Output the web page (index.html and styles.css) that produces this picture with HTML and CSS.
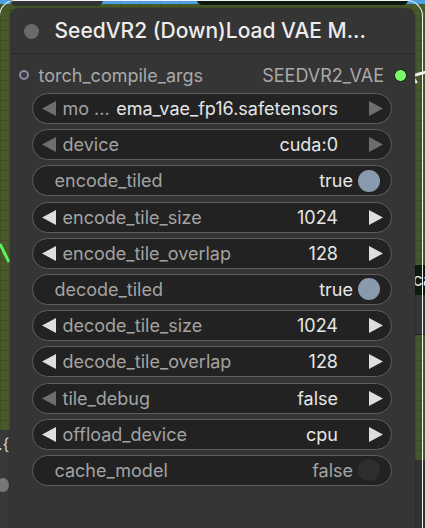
FILE: index.html
```html
<!DOCTYPE html>
<html>
<head>
<meta charset="utf-8">
<link rel="stylesheet" href="styles.css">
</head>
<body>
<div class="canvas">
  <div class="deco strip-top"></div>
  <div class="deco tab-left"></div>
  <div class="deco box-top"></div>
  <div class="deco box-right"><span>ca</span></div>
  <div class="deco grey-right-1"></div>
  <div class="deco grey-right-2"></div>
  <div class="deco grey-left"><span class="frag">.{</span><span class="ldot"></span></div>
  <svg class="deco link-left" width="10" height="24" viewBox="0 0 10 24"><path d="M0 2 L9 20" stroke="#5cf25c" stroke-width="3" fill="none"/></svg>
  <svg class="deco link-right" width="16" height="14" viewBox="0 0 16 14"><path d="M2 6 L16 2 M2 6 L6 12" stroke="#f2f2f2" stroke-width="3" fill="none" stroke-linecap="round"/></svg>

  <div class="selection">
    <div class="node">
      <div class="title">
        <span class="title-dot"></span>
        <span class="title-text">SeedVR2 (Down)Load VAE M...</span>
      </div>
      <div class="io">
        <div class="io-in"><span class="slot-in"></span><span>torch_compile_args</span></div>
        <div class="io-out"><span>SEEDVR2_VAE</span><span class="slot-out"></span></div>
      </div>
      <div class="widgets">
        <div class="widget combo">
          <svg class="arr dim" viewBox="0 0 14 15"><path d="M0 7.5 L14 0 L14 15 Z"/></svg>
          <span class="label short">mo ...</span>
          <span class="value">ema_vae_fp16.safetensors</span>
          <svg class="arr dim" viewBox="0 0 14 15"><path d="M14 7.5 L0 0 L0 15 Z"/></svg>
        </div>
        <div class="widget combo">
          <svg class="arr dim" viewBox="0 0 14 15"><path d="M0 7.5 L14 0 L14 15 Z"/></svg>
          <span class="label">device</span>
          <span class="value">cuda:0</span>
          <svg class="arr dim" viewBox="0 0 14 15"><path d="M14 7.5 L0 0 L0 15 Z"/></svg>
        </div>
        <div class="widget toggle">
          <span class="label">encode_tiled</span>
          <span class="value">true</span>
          <span class="knob on"></span>
        </div>
        <div class="widget combo">
          <svg class="arr" viewBox="0 0 14 15"><path d="M0 7.5 L14 0 L14 15 Z"/></svg>
          <span class="label">encode_tile_size</span>
          <span class="value">1024</span>
          <svg class="arr" viewBox="0 0 14 15"><path d="M14 7.5 L0 0 L0 15 Z"/></svg>
        </div>
        <div class="widget combo">
          <svg class="arr" viewBox="0 0 14 15"><path d="M0 7.5 L14 0 L14 15 Z"/></svg>
          <span class="label">encode_tile_overlap</span>
          <span class="value">128</span>
          <svg class="arr" viewBox="0 0 14 15"><path d="M14 7.5 L0 0 L0 15 Z"/></svg>
        </div>
        <div class="widget toggle">
          <span class="label">decode_tiled</span>
          <span class="value">true</span>
          <span class="knob on"></span>
        </div>
        <div class="widget combo">
          <svg class="arr" viewBox="0 0 14 15"><path d="M0 7.5 L14 0 L14 15 Z"/></svg>
          <span class="label">decode_tile_size</span>
          <span class="value">1024</span>
          <svg class="arr" viewBox="0 0 14 15"><path d="M14 7.5 L0 0 L0 15 Z"/></svg>
        </div>
        <div class="widget combo">
          <svg class="arr" viewBox="0 0 14 15"><path d="M0 7.5 L14 0 L14 15 Z"/></svg>
          <span class="label">decode_tile_overlap</span>
          <span class="value">128</span>
          <svg class="arr" viewBox="0 0 14 15"><path d="M14 7.5 L0 0 L0 15 Z"/></svg>
        </div>
        <div class="widget combo">
          <svg class="arr dim" viewBox="0 0 14 15"><path d="M0 7.5 L14 0 L14 15 Z"/></svg>
          <span class="label">tile_debug</span>
          <span class="value">false</span>
          <svg class="arr" viewBox="0 0 14 15"><path d="M14 7.5 L0 0 L0 15 Z"/></svg>
        </div>
        <div class="widget combo">
          <svg class="arr" viewBox="0 0 14 15"><path d="M0 7.5 L14 0 L14 15 Z"/></svg>
          <span class="label">offload_device</span>
          <span class="value">cpu</span>
          <svg class="arr" viewBox="0 0 14 15"><path d="M14 7.5 L0 0 L0 15 Z"/></svg>
        </div>
        <div class="widget toggle">
          <span class="label">cache_model</span>
          <span class="value off">false</span>
          <span class="knob"></span>
        </div>
      </div>
    </div>
  </div>
</div>
</body>
</html>
```

FILE: styles.css
```css
html, body {
  margin: 0;
  padding: 0;
}
body {
  width: 425px;
  height: 528px;
  overflow: hidden;
  background: #485a2b;
  font-family: Inter, "Noto Sans", sans-serif;
}
.canvas {
  position: relative;
  width: 425px;
  height: 528px;
  overflow: hidden;
  background-color: #485a2b;
  background-image:
    linear-gradient(to right, rgba(0,0,0,0.12) 1px, transparent 1px),
    linear-gradient(to bottom, rgba(0,0,0,0.12) 1px, transparent 1px);
  background-size: 10px 10px;
}
.deco { position: absolute; }
.strip-top { left: 0; top: 0; width: 425px; height: 4px; background: #4d9fe2; }
.tab-left { left: 10px; top: 0; width: 93px; height: 6px; background: #333333; border-radius: 0 0 8px 8px; }
.box-top { left: 197px; top: 0; width: 211px; height: 5px; background: #0c190c; border-radius: 0 0 8px 8px; }
.box-right {
  left: 413px; top: 265px; width: 20px; height: 30px; background: #0e1c0e;
  color: #e8e8e8; font-size: 17px; line-height: 30px; overflow: hidden;
}
.grey-right-1 { left: 413px; top: 295px; width: 20px; height: 39px; background: #383838; border-bottom: 1px solid #222; }
.grey-right-2 { left: 413px; top: 460px; width: 20px; height: 80px; background: #333333; }
.grey-left { left: 0; top: 430px; width: 10px; height: 100px; background: #383838; }
.grey-left .frag { position: absolute; left: -2px; top: 4px; color: #cfcfcf; font-size: 16px; }
.grey-left .ldot { position: absolute; left: -3px; top: 48px; width: 12px; height: 14px; border-radius: 50%; background: #777; }
.link-left { left: 0; top: 242px; }
.link-right { left: 410px; top: 70px; }

.selection {
  position: relative;
  margin: 0 2px 0 -1px;
  padding: 7px 7px 0 9.5px;
  border: 1.5px solid #f4f4f4;
  border-bottom: none;
  border-radius: 16px 16px 0 0;
  height: 560px;
  box-sizing: border-box;
}
.node {
  background: #353535;
  border-radius: 9px 9px 0 0;
  height: 600px;
  box-shadow: 0 0 3px rgba(0,0,0,0.35);
}
.title {
  height: 45px;
  border-bottom: 1px solid #2a2a2a;
  display: flex;
  align-items: center;
  padding-left: 14.5px;
  gap: 15.5px;
}
.title-dot {
  width: 15px; height: 15px; border-radius: 50%;
  background: #6a6a6a; flex: none;
  margin-top: 2px;
}
.title-text {
  color: #ececec;
  font-size: 21px;
  font-weight: 500;
  white-space: nowrap;
}
.io {
  height: 30px;
  margin: 6px 0 3px;
  display: flex;
  justify-content: space-between;
  align-items: center;
  font-size: 18px;
  color: #a9a9a9;
  padding: 0 8px 0 9px;
}
.io-in, .io-out { display: flex; align-items: center; }
.io-in { gap: 10px; }
.io-out { gap: 10px; }
.slot-in {
  width: 6px; height: 6px; border-radius: 50%;
  border: 2.5px solid #8d8da4;
  background: #3a3a44;
}
.slot-out {
  width: 11px; height: 11px; border-radius: 50%;
  background: #78fb6a;
  border: 1.5px solid #161616;
}
.widgets {
  display: flex;
  flex-direction: column;
  gap: 5.2px;
  padding: 0 23px 0 22px;
}
.widget {
  height: 31px;
  box-sizing: border-box;
  background: #222222;
  border: 1px solid #5e5e5e;
  border-radius: 16px;
  display: flex;
  align-items: center;
  font-size: 18px;
  white-space: nowrap;
}
.combo { padding: 0 8px 0 9px; }
.arr { width: 14px; height: 15px; flex: none; fill: #dedede; }
.arr.dim { fill: #6e6e6e; }
.label { color: #a3a3a3; margin-left: 7px; flex: 1; }
.label.short { flex: none; }
.value { color: #e6e6e6; margin-right: 31px; flex: none; text-align: right; }
.label.short + .value { flex: 1; }
.toggle { padding: 0 11px 0 22px; }
.toggle .label { margin-left: 0; }
.toggle .value { margin-right: 5px; }
.value.off { color: #a3a3a3; }
.knob {
  width: 22px; height: 22px; border-radius: 50%;
  background: #2e2e2e; flex: none;
}
.knob.on { background: #8a9aae; }
```
